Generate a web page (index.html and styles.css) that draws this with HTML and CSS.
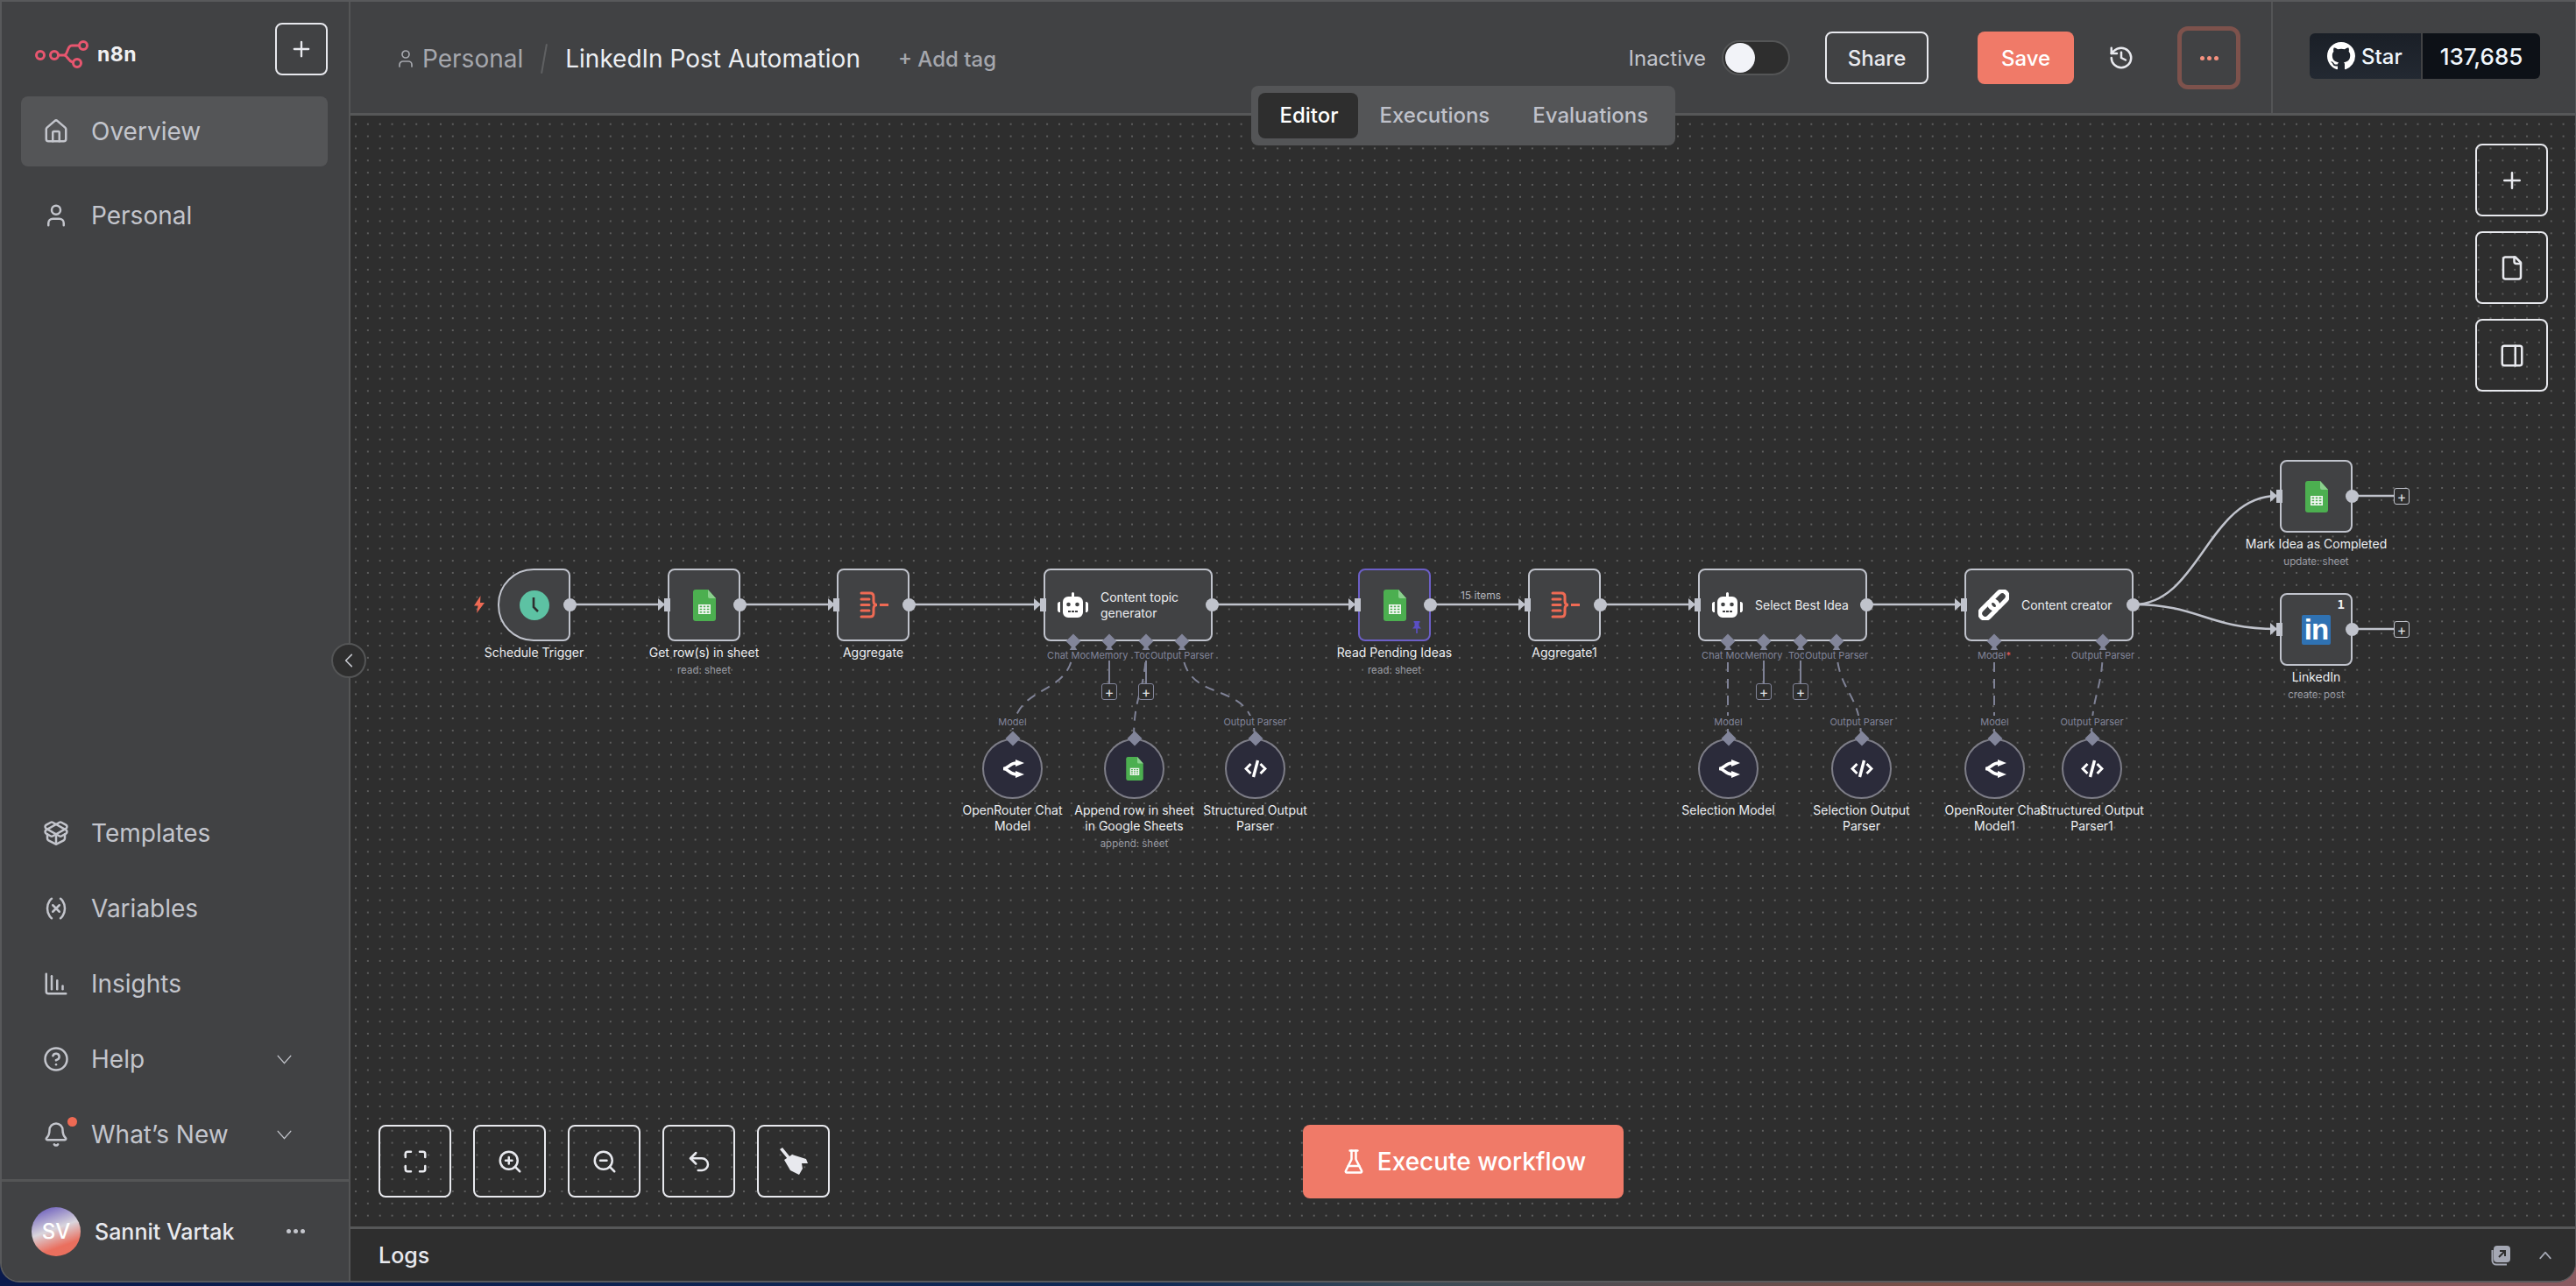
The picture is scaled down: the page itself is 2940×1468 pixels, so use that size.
FILE: index.html
```html
<!DOCTYPE html>
<html>
<head>
    <meta charset="utf-8">
    <title>LinkedIn Post Automation - n8n</title>
    <link rel="stylesheet" href="styles.css">
</head>
<body>
<svg class="defs" width="0" height="0">
    <symbol id="i-sheet" viewBox="0 0 26 36">
        <path fill="#4caf50" d="M3 0h14l9 10v23a3 3 0 0 1-3 3H3a3 3 0 0 1-3-3V3a3 3 0 0 1 3-3z"/>
        <path fill="#8bd08e" d="M17 0l9 10h-7a2 2 0 0 1-2-2z"/>
        <path fill="none" stroke="#f3f6f3" stroke-width="1.6" d="M6.8 17.8h12.4v9.4H6.8zM6.8 21h12.4M6.8 24.1h12.4M11 17.8v9.4M15 17.8v9.4"/>
    </symbol>
    <symbol id="i-agg" viewBox="0 0 34 31">
        <path fill="none" stroke="#ee6a54" stroke-width="3" stroke-linecap="round" d="M2 2h10c3 0 4 1.500 4 4v5c0 3 1 4.500 4 4.500-3 0-4 1.500-4 4.500v5c0 2.500-1 4-4 4H2M2 9h9M2 15.500h9M2 22h9"/>
        <path fill="none" stroke="#ee6a54" stroke-width="3" d="M23 15.500h10"/>
    </symbol>
    <symbol id="i-robot" viewBox="0 0 35 29">
        <path fill="#fff" d="M17.500 0a1.500 1.500 0 0 1 1.500 1.500V5h4a6 6 0 0 1 6 6v12a6 6 0 0 1-6 6H12a6 6 0 0 1-6-6V11a6 6 0 0 1 6-6h4V1.500A1.500 1.500 0 0 1 17.500 0z"/>
        <path fill="#fff" d="M3 11v12a2.500 2.500 0 0 1-3-2.500v-7A2.500 2.500 0 0 1 3 11zM32 11a2.500 2.500 0 0 1 3 2.500v7a2.500 2.500 0 0 1-3 2.500z"/>
        <circle cx="12.500" cy="14" r="2.300" fill="#414244"/><circle cx="22.500" cy="14" r="2.300" fill="#414244"/>
        <path fill="#414244" d="M12 21h3v2h-3zM16 21h3v2h-3zM20 21h3v2h-3z"/>
    </symbol>
    <symbol id="i-router" viewBox="0 0 26 21">
        <path fill="none" stroke="#fff" stroke-width="3.600" d="M2 10.500c6 0 7-6.500 15-6.500M2 10.500c6 0 7 6.500 15 6.500"/>
        <path fill="#fff" d="M16 0l10 4-10 4zM16 13l10 4-10 4z"/>
    </symbol>
    <symbol id="i-code" viewBox="0 0 26 21">
        <path fill="none" stroke="#fff" stroke-width="3" d="M7.500 5L2 10.500 7.500 16M18.500 5L24 10.500 18.500 16"/>
        <path fill="none" stroke="#fff" stroke-width="3.400" d="M15.500 1L10.500 20"/>
    </symbol>
</svg>

<div class="window">
    <aside class="sidebar">
        <div class="brand-row">
            <div class="brand">
                <svg class="logo" viewBox="0 0 62 34" fill="none" stroke="#e8566f" stroke-width="3">
                    <circle cx="6" cy="18" r="4.500"/><circle cx="22" cy="18" r="4.500"/><circle cx="55" cy="7" r="4.500"/><circle cx="48" cy="27" r="4.500"/>
                    <path d="M27 18h6M33 18c5 0 3-11 9-11h8M33 18c4 0 4 6 10 8"/>
                </svg>
                <span class="brand-name">n8n</span>
            </div>
            <button class="icon-btn btn-new">
                <svg class="ico" viewBox="0 0 24 24"><path d="M5 12h14M12 5v14"/></svg>
            </button>
        </div>
        <nav class="nav-top">
            <a class="nav-item active">
                <svg class="ico" viewBox="0 0 24 24"><path d="M15 21v-8a1 1 0 0 0-1-1h-4a1 1 0 0 0-1 1v8"/><path d="M3 10a2 2 0 0 1 .709-1.528l7-5.999a2 2 0 0 1 2.582 0l7 5.999A2 2 0 0 1 21 10v9a2 2 0 0 1-2 2H5a2 2 0 0 1-2-2z"/></svg>
                <span>Overview</span>
            </a>
            <a class="nav-item">
                <svg class="ico" viewBox="0 0 24 24"><path d="M19 21v-2a4 4 0 0 0-4-4H9a4 4 0 0 0-4 4v2"/><circle cx="12" cy="7" r="4"/></svg>
                <span>Personal</span>
            </a>
        </nav>
        <nav class="nav-bottom">
            <a class="nav-item">
                <svg class="ico" viewBox="0 0 24 24"><path d="M12 22v-9"/><path d="M15.170 2.210a1.670 1.670 0 0 1 1.630 0L21 4.570a1.930 1.930 0 0 1 0 3.360L8.820 14.790a1.655 1.655 0 0 1-1.640 0L3 12.430a1.930 1.930 0 0 1 0-3.360z"/><path d="M20 13v3.870a2.060 2.060 0 0 1-1.070 1.800l-5.940 3.090a2 2 0 0 1-1.980 0l-5.940-3.090A2.060 2.060 0 0 1 4 16.870V13"/><path d="M21 12.430a1.930 1.930 0 0 0 0-3.360L8.830 2.200a1.640 1.640 0 0 0-1.630 0L3 4.570a1.930 1.930 0 0 0 0 3.360l12.180 6.860a1.636 1.636 0 0 0 1.630 0z"/></svg>
                <span>Templates</span>
            </a>
            <a class="nav-item">
                <svg class="ico" viewBox="0 0 24 24"><path d="M8 21s-4-3-4-9 4-9 4-9"/><path d="M16 3s4 3 4 9-4 9-4 9"/><path d="M15 9l-6 6M9 9l6 6"/></svg>
                <span>Variables</span>
            </a>
            <a class="nav-item">
                <svg class="ico" viewBox="0 0 24 24"><path d="M13 17V9"/><path d="M18 17v-3"/><path d="M3 3v16a2 2 0 0 0 2 2h16"/><path d="M8 17V5"/></svg>
                <span>Insights</span>
            </a>
            <a class="nav-item">
                <svg class="ico" viewBox="0 0 24 24"><circle cx="12" cy="12" r="10"/><path d="M9.090 9a3 3 0 0 1 5.830 1c0 2-3 3-3 3"/><path d="M12 17h.01"/></svg>
                <span>Help</span>
                <svg class="ico chevron" viewBox="0 0 24 24"><path d="M5 8l7 8 7-8"/></svg>
            </a>
            <a class="nav-item">
                <span class="bell">
                    <svg class="ico" viewBox="0 0 24 24"><path d="M10.268 21a2 2 0 0 0 3.464 0"/><path d="M3.262 15.326A1 1 0 0 0 4 17h16a1 1 0 0 0 .740-1.673C19.410 13.956 18 12.499 18 8A6 6 0 0 0 6 8c0 4.499-1.411 5.956-2.738 7.326"/></svg>
                    <i class="bell-dot"></i>
                </span>
                <span>What’s New</span>
                <svg class="ico chevron" viewBox="0 0 24 24"><path d="M5 8l7 8 7-8"/></svg>
            </a>
        </nav>
        <div class="user-row">
            <div class="avatar">SV</div>
            <span class="user-name">Sannit Vartak</span>
            <span class="user-more"><i></i><i></i><i></i></span>
        </div>
    </aside>

    <main class="main">
        <header class="topbar">
            <div class="crumbs">
                <svg class="ico crumb-ico" viewBox="0 0 24 24"><path d="M19 21v-2a4 4 0 0 0-4-4H9a4 4 0 0 0-4 4v2"/><circle cx="12" cy="7" r="4"/></svg>
                <span class="crumb-project">Personal</span>
                <span class="crumb-sep"></span>
                <span class="crumb-title">LinkedIn Post Automation</span>
                <span class="add-tag">+ Add tag</span>
            </div>
            <div class="actions">
                <span class="status">Inactive</span>
                <span class="toggle"><i></i></span>
                <button class="btn-share">Share</button>
                <button class="btn-save">Save</button>
                <svg class="ico history" viewBox="0 0 24 24"><path d="M3 12a9 9 0 1 0 9-9 9.750 9.750 0 0 0-6.740 2.740L3 8"/><path d="M3 3v5h5"/><path d="M12 7v5l4 2"/></svg>
                <button class="btn-more"><i></i><i></i><i></i></button>
            </div>
            <div class="star-wrap">
                <div class="gh-star">
                    <span class="gh-left">
                        <svg class="gh-mark" viewBox="0 0 16 16"><path fill="#fff" d="M8 0C3.580 0 0 3.580 0 8c0 3.540 2.290 6.530 5.470 7.590.4.070.55-.17.55-.38 0-.19-.01-.82-.01-1.490-2.010.37-2.530-.49-2.690-.94-.09-.23-.48-.94-.82-1.130-.28-.15-.68-.52-.01-.53.63-.01 1.080.58 1.230.82.72 1.210 1.870.87 2.330.66.07-.52.28-.87.51-1.070-1.780-.2-3.640-.89-3.640-3.950 0-.87.31-1.590.82-2.150-.08-.2-.36-1.020.08-2.120 0 0 .67-.21 2.200.82.64-.18 1.320-.27 2-.27.68 0 1.360.09 2 .27 1.530-1.040 2.200-.82 2.200-.82.44 1.100.16 1.920.08 2.120.51.56.82 1.270.82 2.150 0 3.070-1.870 3.750-3.650 3.950.29.25.54.73.54 1.480 0 1.070-.01 1.930-.01 2.200 0 .21.15.46.55.38A8.013 8.013 0 0016 8c0-4.420-3.580-8-8-8z"/></svg>
                        Star
                    </span>
                    <span class="gh-count">137,685</span>
                </div>
            </div>
        </header>

        <div class="tabs">
            <span class="tab active">Editor</span>
            <span class="tab">Executions</span>
            <span class="tab">Evaluations</span>
        </div>

        <section class="canvas">
            <div class="flow">
                <svg class="edges" width="2940" height="1468" fill="none">
                    <defs>
                        <marker id="arrow" markerUnits="userSpaceOnUse" markerWidth="9" markerHeight="14" refX="8" refY="7" orient="auto">
                            <path d="M0 0L8 7 0 14z" fill="#c0c3cc"/>
                        </marker>
                    </defs>
                    <g class="edge">
                        <path d="M650 690H759" marker-end="url(#arrow)"/>
                        <path d="M844 690H953" marker-end="url(#arrow)"/>
                        <path d="M1037 690H1188" marker-end="url(#arrow)"/>
                        <path d="M1383 690H1547" marker-end="url(#arrow)"/>
                        <path d="M1633 690H1741" marker-end="url(#arrow)"/>
                        <path d="M1826 690H1935" marker-end="url(#arrow)"/>
                        <path d="M2130 690H2239" marker-end="url(#arrow)"/>
                        <path d="M2435 690C2510 690 2520 566 2599 566" marker-end="url(#arrow)"/>
                        <path d="M2435 690C2510 690 2520 718 2599 718" marker-end="url(#arrow)"/>
                        <path d="M2684 566H2732M2684 718H2732"/>
                    </g>
                    <g class="wire">
                        <path d="M1266 737V780M1308 737V780M2013 737V780M2055 737V780"/>
                    </g>
                    <g class="wire dashed">
                        <path d="M1225 737C1225 800 1155 775 1155 843"/>
                        <path d="M1308 737C1308 790 1294 790 1294 843"/>
                        <path d="M1349 737C1349 810 1432 770 1432 843"/>
                        <path d="M1972 737V843"/>
                        <path d="M2096 737C2096 790 2124 790 2124 843"/>
                        <path d="M2276 737V843"/>
                        <path d="M2400 737C2400 790 2387 790 2387 843"/>
                    </g>
                    <path class="tips" d="M1220 743l5-8 5 8zM1261 743l5-8 5 8zM1303 743l5-8 5 8zM1344 743l5-8 5 8zM1967 743l5-8 5 8zM2008 743l5-8 5 8zM2050 743l5-8 5 8zM2091 743l5-8 5 8zM2271 743l5-8 5 8zM2395 743l5-8 5 8z"/>
                </svg>

                <svg class="bolt" viewBox="0 0 12 20"><path fill="#ee6a54" d="M7.500 0L0 11.500h4.500L3 20l9-12H7z"/></svg>

                <div class="node n-schedule">
                    <svg class="clock" viewBox="0 0 34 34"><circle cx="17" cy="17" r="17" fill="#5dc2a3"/><path d="M16 8v11l5 5" fill="none" stroke="#2e2e2e" stroke-width="2.600"/></svg>
                    <i class="port-out"></i>
                    <div class="label">Schedule Trigger</div>
                </div>
                <div class="node n-rows">
                    <svg class="sheet"><use href="#i-sheet"/></svg>
                    <i class="port-in"></i><i class="port-out"></i>
                    <div class="label">Get row(s) in sheet<small>read: sheet</small></div>
                </div>
                <div class="node n-agg">
                    <svg class="agg"><use href="#i-agg"/></svg>
                    <i class="port-in"></i><i class="port-out"></i>
                    <div class="label">Aggregate</div>
                </div>
                <div class="node wide n-topic">
                    <svg class="robot"><use href="#i-robot"/></svg>
                    <span class="node-text">Content topic<br>generator</span>
                    <i class="port-in"></i><i class="port-out"></i>
                    <i class="diamond d1"></i><i class="diamond d2"></i><i class="diamond d3"></i><i class="diamond d4"></i>
                </div>
                <div class="node pinned n-read">
                    <svg class="sheet"><use href="#i-sheet"/></svg>
                    <svg class="pin" viewBox="0 0 10 14"><path fill="#5a4fc4" d="M1.500 0h7v1.500L7.500 2v3.500L10 8.500H5.800V14h-1.600V8.500H0l2.500-3V2l-1-.5z"/></svg>
                    <i class="port-in"></i><i class="port-out"></i>
                    <div class="label">Read Pending Ideas<small>read: sheet</small></div>
                </div>
                <div class="node n-agg1">
                    <svg class="agg"><use href="#i-agg"/></svg>
                    <i class="port-in"></i><i class="port-out"></i>
                    <div class="label">Aggregate1</div>
                </div>
                <div class="node wide n-best">
                    <svg class="robot"><use href="#i-robot"/></svg>
                    <span class="node-text">Select Best Idea</span>
                    <i class="port-in"></i><i class="port-out"></i>
                    <i class="diamond d1"></i><i class="diamond d2"></i><i class="diamond d3"></i><i class="diamond d4"></i>
                </div>
                <div class="node wide n-creator">
                    <svg class="chain" viewBox="0 0 35 35" fill="none" stroke="#fff" stroke-width="5">
                        <rect x="17" y="0" width="12" height="24" rx="6" transform="rotate(45 23 12)"/>
                        <rect x="6" y="11" width="12" height="24" rx="6" transform="rotate(45 12 23)"/>
                    </svg>
                    <span class="node-text">Content creator</span>
                    <i class="port-in"></i><i class="port-out"></i>
                    <i class="diamond dm"></i><i class="diamond dp"></i>
                </div>
                <div class="node n-mark">
                    <svg class="sheet"><use href="#i-sheet"/></svg>
                    <i class="port-in"></i><i class="port-out"></i>
                    <div class="label">Mark Idea as Completed<small>update: sheet</small></div>
                </div>
                <div class="node n-linkedin">
                    <span class="run-count">1</span>
                    <span class="li-logo">in</span>
                    <i class="port-in"></i><i class="port-out"></i>
                    <div class="label">LinkedIn<small>create: post</small></div>
                </div>

                <span class="items-tag">15 items</span>

                <span class="slot s-a1">Chat Model</span><span class="slot s-a2">Memory</span><span class="slot s-a3">Tools</span><span class="slot s-a4">Output Parser</span>
                <span class="slot s-b1">Chat Model</span><span class="slot s-b2">Memory</span><span class="slot s-b3">Tools</span><span class="slot s-b4">Output Parser</span>
                <span class="slot s-c1">Model<b>*</b></span><span class="slot s-c2">Output Parser</span>

                <span class="plus p1">+</span><span class="plus p2">+</span><span class="plus p3">+</span><span class="plus p4">+</span>
                <span class="plus p5">+</span><span class="plus p6">+</span>

                <div class="sub c1">
                    <span class="sub-slot">Model</span><i class="diamond"></i>
                    <svg class="sub-ico"><use href="#i-router"/></svg>
                    <div class="label">OpenRouter Chat<br>Model</div>
                </div>
                <div class="sub c2">
                    <i class="diamond"></i>
                    <svg class="sheet small"><use href="#i-sheet"/></svg>
                    <div class="label">Append row in sheet<br>in Google Sheets<small>append: sheet</small></div>
                </div>
                <div class="sub c3">
                    <span class="sub-slot">Output Parser</span><i class="diamond"></i>
                    <svg class="sub-ico"><use href="#i-code"/></svg>
                    <div class="label">Structured Output<br>Parser</div>
                </div>
                <div class="sub c4">
                    <span class="sub-slot">Model</span><i class="diamond"></i>
                    <svg class="sub-ico"><use href="#i-router"/></svg>
                    <div class="label">Selection Model</div>
                </div>
                <div class="sub c5">
                    <span class="sub-slot">Output Parser</span><i class="diamond"></i>
                    <svg class="sub-ico"><use href="#i-code"/></svg>
                    <div class="label">Selection Output<br>Parser</div>
                </div>
                <div class="sub c6">
                    <span class="sub-slot">Model</span><i class="diamond"></i>
                    <svg class="sub-ico"><use href="#i-router"/></svg>
                    <div class="label">OpenRouter Chat<br>Model1</div>
                </div>
                <div class="sub c7">
                    <span class="sub-slot">Output Parser</span><i class="diamond"></i>
                    <svg class="sub-ico"><use href="#i-code"/></svg>
                    <div class="label">Structured Output<br>Parser1</div>
                </div>
            </div>

            <div class="side-tools">
                <button class="tool"><svg class="ico" viewBox="0 0 24 24"><path d="M5 12h14M12 5v14"/></svg></button>
                <button class="tool"><svg class="ico" viewBox="0 0 24 24"><path d="M15 2H6a2 2 0 0 0-2 2v16a2 2 0 0 0 2 2h12a2 2 0 0 0 2-2V7Z"/><path d="M14 2v4a2 2 0 0 0 2 2h4"/></svg></button>
                <button class="tool"><svg class="ico" viewBox="0 0 24 24"><rect width="18" height="18" x="3" y="3" rx="2"/><path d="M15 3v18"/></svg></button>
            </div>

            <div class="zoom-tools">
                <button class="tool"><svg class="ico" viewBox="0 0 24 24"><path d="M8 3H5a2 2 0 0 0-2 2v3"/><path d="M21 8V5a2 2 0 0 0-2-2h-3"/><path d="M3 16v3a2 2 0 0 0 2 2h3"/><path d="M16 21h3a2 2 0 0 0 2-2v-3"/></svg></button>
                <button class="tool"><svg class="ico" viewBox="0 0 24 24"><circle cx="11" cy="11" r="8"/><path d="M21 21l-4.300-4.300M11 8v6M8 11h6"/></svg></button>
                <button class="tool"><svg class="ico" viewBox="0 0 24 24"><circle cx="11" cy="11" r="8"/><path d="M21 21l-4.300-4.300M8 11h6"/></svg></button>
                <button class="tool"><svg class="ico" viewBox="0 0 24 24"><path d="M9 14L4 9l5-5"/><path d="M4 9h10.500a5.500 5.500 0 0 1 5.500 5.500 5.500 5.500 0 0 1-5.500 5.500H11"/></svg></button>
                <button class="tool"><svg class="broom" viewBox="0 0 33 31"><path fill="#e8e9ee" d="M1 2l3-2 9 11-3 2zM6 14l9-6 16 5 2 5h-7l1 6-4 7-10-5z"/></svg></button>
            </div>

            <button class="btn-execute">
                <svg class="ico" viewBox="0 0 24 24"><path d="M10 2v7.527a2 2 0 0 1-.211.896L4.720 20.550a1 1 0 0 0 .9 1.450h12.760a1 1 0 0 0 .9-1.450l-5.069-10.127A2 2 0 0 1 14 9.527V2"/><path d="M8.500 2h7"/><path d="M7 16h10"/></svg>
                Execute workflow
            </button>
        </section>

        <footer class="logs">
            <span class="logs-title">Logs</span>
            <svg class="logs-pop" viewBox="0 0 24 24"><rect x="3" y="1" width="19" height="19" rx="4" fill="#a5a8b4"/><path d="M1.500 6v12a4.500 4.500 0 0 0 4.500 4.500h12" fill="none" stroke="#a5a8b4" stroke-width="2"/><path d="M9 14l7-7M10 7h6v6" fill="none" stroke="#2e2e2e" stroke-width="2"/></svg>
            <svg class="ico logs-chevron" viewBox="0 0 24 24"><path d="M5 16l7-8 7 8"/></svg>
        </footer>

        <button class="collapse">
            <svg class="ico" viewBox="0 0 24 24"><path d="M16 4l-8 8 8 8"/></svg>
        </button>
    </main>
</div>
</body>
</html>
```

FILE: styles.css
```css
* {
    box-sizing: border-box;
}
html, body {
    margin: 0;
    height: 100%;
}
body {
    background: linear-gradient(90deg, #0a1a4c 0%, #102a55 45%, #3a4a55 55%, #7a5048 75%, #8a5a60 100%);
    font-family: Inter, "Noto Sans", sans-serif;
    overflow: hidden;
}
button {
    font-family: inherit;
    padding: 0;
    background: none;
    cursor: pointer;
}
.defs {
    position: absolute;
}
.ico {
    fill: none;
    stroke: currentColor;
    stroke-width: 2;
    stroke-linecap: round;
    stroke-linejoin: round;
}

.window {
    display: flex;
    width: 2940px;
    height: 1464px;
    border: 2px solid #58595b;
    border-right-width: 1px;
    border-radius: 0 0 22px 22px;
    overflow: hidden;
    background: #2e2e2e;
}

/* sidebar */
.sidebar {
    display: flex;
    flex-direction: column;
    flex: none;
    width: 398px;
    background: #414244;
    border-right: 2px solid #545556;
}
.brand-row {
    display: flex;
    align-items: center;
    justify-content: space-between;
    padding: 24px 24px 0 38px;
}
.brand {
    display: flex;
    align-items: center;
    gap: 9px;
    margin-top: 11px;
}
.logo {
    width: 62px;
    height: 34px;
}
.brand-name {
    color: #f0f0f2;
    font-size: 23px;
    font-weight: 700;
    letter-spacing: 0.5px;
}
.icon-btn {
    display: flex;
    align-items: center;
    justify-content: center;
    width: 60px;
    height: 60px;
    border: 2px solid #e8e9ee;
    border-radius: 8px;
    color: #e8e9ee;
}
.icon-btn .ico {
    width: 28px;
    height: 28px;
}
.nav-top {
    display: flex;
    flex-direction: column;
    gap: 16px;
    padding: 24px 24px 0 22px;
}
.nav-bottom {
    display: flex;
    flex-direction: column;
    margin-top: auto;
    padding: 0 24px 8px 22px;
}
.nav-item {
    display: flex;
    align-items: center;
    gap: 25px;
    height: 80px;
    padding-left: 26px;
    padding-right: 40px;
    border-radius: 8px;
    color: #c3c5cc;
    font-size: 28px;
}
.nav-item .ico {
    flex: none;
    width: 30px;
    height: 30px;
    margin-left: -1px;
}
.nav-bottom .nav-item {
    height: 86px;
}
.nav-item.active {
    background: #545557;
}
.nav-item .chevron {
    width: 25px;
    height: 25px;
    margin-left: auto;
    margin-right: -3px;
    stroke-width: 1.300;
}
.bell {
    position: relative;
    display: flex;
}
.bell-dot {
    position: absolute;
    top: -5px;
    right: -9px;
    width: 11px;
    height: 11px;
    border-radius: 50%;
    background: #ee6a54;
}
.user-row {
    display: flex;
    align-items: center;
    flex: 1;
    max-height: 116px;
    padding: 0 50px 0 34px;
    border-top: 3px solid #545556;
}
.avatar {
    display: flex;
    align-items: center;
    justify-content: center;
    flex: none;
    width: 56px;
    height: 56px;
    border-radius: 50%;
    background: linear-gradient(160deg, #5b4bb8 0%, #d9d5dc 45%, #ea6f5e 75%, #e8705e 100%);
    color: #fff;
    font-size: 24px;
    font-weight: 500;
}
.user-name {
    margin-left: 16px;
    color: #e8e9ee;
    font-size: 25px;
    font-weight: 500;
}
.user-more {
    display: flex;
    gap: 3px;
    margin-left: auto;
}
.user-more i {
    width: 5px;
    height: 5px;
    border-radius: 50%;
    background: #c3c5cc;
}

/* main column */
.main {
    position: relative;
    display: flex;
    flex-direction: column;
    flex: 1;
    min-width: 0;
}
.topbar {
    display: flex;
    align-items: stretch;
    flex: none;
    height: 130px;
    background: #414244;
    border-bottom: 3px solid #565758;
}
.crumbs {
    display: flex;
    align-items: center;
    flex: 1;
    padding-left: 51px;
    padding-top: 3px;
}
.crumb-ico {
    width: 24px;
    height: 24px;
    color: #a5a7ad;
    stroke-width: 1.700;
}
.crumb-project {
    margin-left: 7px;
    color: #a5a7ad;
    font-size: 28px;
}
.crumb-sep {
    width: 2px;
    height: 34px;
    margin: 0 23px;
    background: #5f6062;
    transform: rotate(10deg);
}
.crumb-title {
    color: #eceef2;
    font-size: 28px;
}
.add-tag {
    margin-left: 43px;
    color: #a5a7ad;
    font-size: 24px;
    font-weight: 500;
}
.actions {
    display: flex;
    align-items: center;
    padding-top: 1px;
    padding-right: 35px;
}
.status {
    color: #c3c5cc;
    font-size: 24px;
}
.toggle {
    display: flex;
    align-items: center;
    width: 78px;
    height: 40px;
    margin-left: 18px;
    padding-left: 2px;
    border: 2px solid #545556;
    border-radius: 20px;
    background: #2e2e2e;
}
.toggle i {
    width: 34px;
    height: 34px;
    border-radius: 50%;
    background: #f2f3f8;
}
.btn-share {
    width: 118px;
    height: 60px;
    margin-left: 40px;
    border: 2px solid #e8e9ee;
    border-radius: 8px;
    color: #e8e9ee;
    font-size: 24px;
    font-weight: 500;
}
.btn-save {
    width: 110px;
    height: 60px;
    margin-left: 56px;
    border: 0;
    border-radius: 8px;
    background: #f07a68;
    color: #fff;
    font-size: 24px;
    font-weight: 500;
}
.history {
    width: 30px;
    height: 30px;
    margin-left: 39px;
    color: #e8e9ee;
}
.btn-more {
    display: flex;
    align-items: center;
    justify-content: center;
    gap: 3px;
    width: 72px;
    height: 72px;
    margin-left: 49px;
    border: 5px solid #7d524c;
    border-radius: 12px;
}
.btn-more i {
    width: 5px;
    height: 5px;
    border-radius: 50%;
    background: #f5917f;
}
.star-wrap {
    display: flex;
    align-items: center;
    width: 347px;
    padding: 0 0 3px 42px;
    border-left: 2px solid #545556;
}
.gh-star {
    display: flex;
    gap: 2px;
    height: 52px;
    border-radius: 6px;
    overflow: hidden;
}
.gh-left {
    display: flex;
    align-items: center;
    gap: 7px;
    width: 127px;
    padding-left: 20px;
    background: linear-gradient(#1a1f27, #232932);
    color: #f0f6fc;
    font-size: 24px;
    font-weight: 500;
}
.gh-mark {
    width: 32px;
    height: 32px;
}
.gh-count {
    display: flex;
    align-items: center;
    justify-content: center;
    width: 134px;
    background: #0d1117;
    color: #f0f6fc;
    font-size: 26px;
    font-weight: 500;
}

/* editor / executions switch sits over the header edge */
.tabs {
    position: absolute;
    left: 1028px;
    top: 96px;
    display: flex;
    align-items: center;
    width: 484px;
    height: 68px;
    padding-left: 8px;
    border-radius: 8px;
    background: #545557;
    z-index: 3;
}
.tab {
    padding: 0 24.500px;
    color: #bfc1ca;
    font-size: 24px;
    font-weight: 500;
    line-height: 52px;
    border-radius: 8px;
}
.tab.active {
    width: 114px;
    background: #2e2e2e;
    color: #fff;
}

/* canvas */
.canvas {
    position: relative;
    flex: 1;
    background-color: #2e2e2e;
    background-image: radial-gradient(circle, #767676 0.6px, transparent 0.9px);
    background-size: 13.85px 13.85px;
    background-position: -0.9px 2.8px;
    overflow: hidden;
}
.flow {
    position: absolute;
    left: -400px;
    top: -132px;
    width: 2940px;
    height: 1468px;
}
.edges {
    position: absolute;
    left: 0;
    top: 0;
}
.edge path {
    stroke: #c0c3cc;
    stroke-width: 2.500;
}
.wire path {
    stroke: #7f8296;
    stroke-width: 2;
}
.dashed path {
    stroke-dasharray: 11 8;
}
.tips {
    fill: #82859a;
}
.bolt {
    position: absolute;
    left: 541px;
    top: 680px;
    width: 12px;
    height: 20px;
}
.items-tag {
    position: absolute;
    left: 1650px;
    width: 80px;
    top: 672px;
    color: #b3b5bd;
    font-size: 12px;
    text-align: center;
}

/* nodes, placed at their spot on the free canvas */
.node {
    position: absolute;
    top: 649px;
    display: flex;
    align-items: center;
    justify-content: center;
    width: 83px;
    height: 83px;
    border: 2px solid #c0c3cc;
    border-radius: 8px;
    background: #414244;
}
.node.wide {
    justify-content: flex-start;
    gap: 14px;
    width: 193px;
    padding-left: 14px;
}
.node.pinned {
    border-color: #6c5fc7;
}
.n-schedule { left: 568px; border-radius: 41px 8px 8px 41px; }
.n-rows { left: 762px; }
.n-agg { left: 955px; }
.n-topic { left: 1191px; }
.n-read { left: 1550px; }
.n-agg1 { left: 1744px; }
.n-best { left: 1938px; }
.n-creator { left: 2242px; }
.n-mark { left: 2602px; top: 525px; }
.n-linkedin { left: 2602px; top: 677px; }

.port-in {
    position: absolute;
    left: -6px;
    top: 32px;
    width: 7px;
    height: 15px;
    background: #c0c3cc;
}
.port-out {
    position: absolute;
    right: -9px;
    top: 32px;
    width: 15px;
    height: 15px;
    border-radius: 50%;
    background: #c0c3cc;
}
.diamond {
    position: absolute;
    width: 12px;
    height: 12px;
    bottom: -8px;
    background: #82859a;
    transform: rotate(45deg);
}
.n-topic .d1, .n-best .d1 { left: 26px; }
.n-topic .d2, .n-best .d2 { left: 67px; }
.n-topic .d3, .n-best .d3 { left: 109px; }
.n-topic .d4, .n-best .d4 { left: 150px; }
.n-creator .dm { left: 26px; }
.n-creator .dp { left: 150px; }

.node-text {
    color: #eceef2;
    font-size: 14px;
    line-height: 18px;
}
.label {
    position: absolute;
    left: 50%;
    top: 100%;
    margin-top: 6px;
    transform: translateX(-50%);
    color: #eceef2;
    font-size: 14px;
    line-height: 18px;
    text-align: center;
    white-space: nowrap;
}
.label small {
    display: block;
    margin-top: 2px;
    color: #9a9ca4;
    font-size: 11.500px;
    font-weight: 400;
}

.sheet {
    width: 26px;
    height: 36px;
}
.sheet.small {
    width: 20px;
    height: 27px;
}
.agg {
    width: 34px;
    height: 31px;
    margin-left: 2px;
}
.robot {
    flex: none;
    width: 35px;
    height: 29px;
}
.chain {
    flex: none;
    width: 35px;
    height: 35px;
}
.clock {
    width: 34px;
    height: 34px;
}
.pin {
    position: absolute;
    right: 9px;
    bottom: 7px;
    width: 10px;
    height: 14px;
}
.run-count {
    position: absolute;
    right: 7px;
    top: 3px;
    color: #f0f0f2;
    font-family: "DejaVu Sans Mono", monospace;
    font-size: 14px;
    font-weight: 700;
}
.li-logo {
    display: flex;
    align-items: center;
    justify-content: center;
    width: 33px;
    height: 34px;
    border-radius: 2px;
    background: #2f72b3;
    color: #fff;
    font-family: "Liberation Sans", sans-serif;
    font-size: 33px;
    font-weight: 700;
    letter-spacing: -1px;
    line-height: 34px;
}

/* sub nodes */
.sub {
    position: absolute;
    top: 843px;
    display: flex;
    align-items: center;
    justify-content: center;
    width: 69px;
    height: 69px;
    border: 2px solid #7d7d87;
    border-radius: 50%;
    background: #2b2b3a;
}
.c1 { left: 1121px; }
.c2 { left: 1260px; }
.c3 { left: 1398px; }
.c4 { left: 1938px; }
.c5 { left: 2090px; }
.c6 { left: 2242px; }
.c7 { left: 2353px; }
.sub .diamond {
    left: 27px;
    top: -8px;
    bottom: auto;
}
.sub-ico {
    width: 26px;
    height: 21px;
}
.sub-slot {
    position: absolute;
    left: 50%;
    top: -28px;
    transform: translateX(-50%);
    padding: 0 1px;
    background: #2e2e2e;
    color: #82859a;
    font-size: 11px;
    line-height: 14px;
    white-space: nowrap;
}
.slot {
    position: absolute;
    top: 742px;
    padding: 0 1px;
    background: #2e2e2e;
    color: #82859a;
    font-size: 11px;
    line-height: 12px;
    white-space: nowrap;
    transform: translateX(-50%);
}
.slot b {
    color: #e85d5d;
    font-weight: 400;
}
.s-a1 { left: 1225px; }
.s-a2 { left: 1266px; }
.s-a3 { left: 1308px; }
.s-a4 { left: 1349px; }
.s-b1 { left: 1972px; }
.s-b2 { left: 2013px; }
.s-b3 { left: 2055px; }
.s-b4 { left: 2096px; }
.s-c1 { left: 2276px; }
.s-c2 { left: 2400px; }
.plus {
    position: absolute;
    display: flex;
    align-items: center;
    justify-content: center;
    top: 780px;
    width: 18px;
    height: 19px;
    border: 1.500px solid #82859a;
    border-radius: 3px;
    background: #2e2e2e;
    color: #e0e1e6;
    font-size: 16px;
    line-height: 1;
}
.p1 { left: 1257px; }
.p2 { left: 1299px; }
.p3 { left: 2004px; }
.p4 { left: 2046px; }
.p5 { left: 2732px; top: 557px; border-color: #c0c3cc; }
.p6 { left: 2732px; top: 709px; border-color: #c0c3cc; }

/* canvas tools */
.side-tools {
    position: absolute;
    right: 31px;
    top: 32px;
    display: flex;
    flex-direction: column;
    gap: 17px;
}
.zoom-tools {
    position: absolute;
    left: 32px;
    bottom: 33px;
    display: flex;
    gap: 25px;
}
.tool {
    display: flex;
    align-items: center;
    justify-content: center;
    width: 83px;
    height: 83px;
    border: 2px solid #e8e9ee;
    border-radius: 8px;
    color: #e8e9ee;
}
.tool .ico {
    width: 30px;
    height: 30px;
}
.broom {
    width: 33px;
    height: 31px;
}
.btn-execute {
    position: absolute;
    left: 1087px;
    bottom: 32px;
    display: flex;
    align-items: center;
    justify-content: center;
    gap: 12px;
    width: 366px;
    height: 84px;
    border: 0;
    border-radius: 8px;
    background: #f07a68;
    color: #fff;
    font-size: 28px;
    font-weight: 500;
}
.btn-execute .ico {
    width: 30px;
    height: 30px;
}

/* logs */
.logs {
    display: flex;
    align-items: center;
    flex: none;
    height: 62px;
    padding: 0 24px 0 32px;
    border-top: 3px solid #565758;
    background: #2e2e2e;
}
.logs-title {
    color: #e8e9ee;
    font-size: 25px;
    font-weight: 500;
}
.logs-pop {
    width: 24px;
    height: 24px;
    margin-left: auto;
}
.logs-chevron {
    width: 20px;
    height: 20px;
    margin-left: 28px;
    color: #a5a8b4;
}

.collapse {
    position: absolute;
    left: -22px;
    top: 732px;
    display: flex;
    align-items: center;
    justify-content: center;
    width: 40px;
    height: 40px;
    border: 2px solid #545556;
    border-radius: 50%;
    background: #2e2e2e;
    color: #c3c5cc;
    z-index: 3;
}
.collapse .ico {
    width: 20px;
    height: 20px;
}
```
